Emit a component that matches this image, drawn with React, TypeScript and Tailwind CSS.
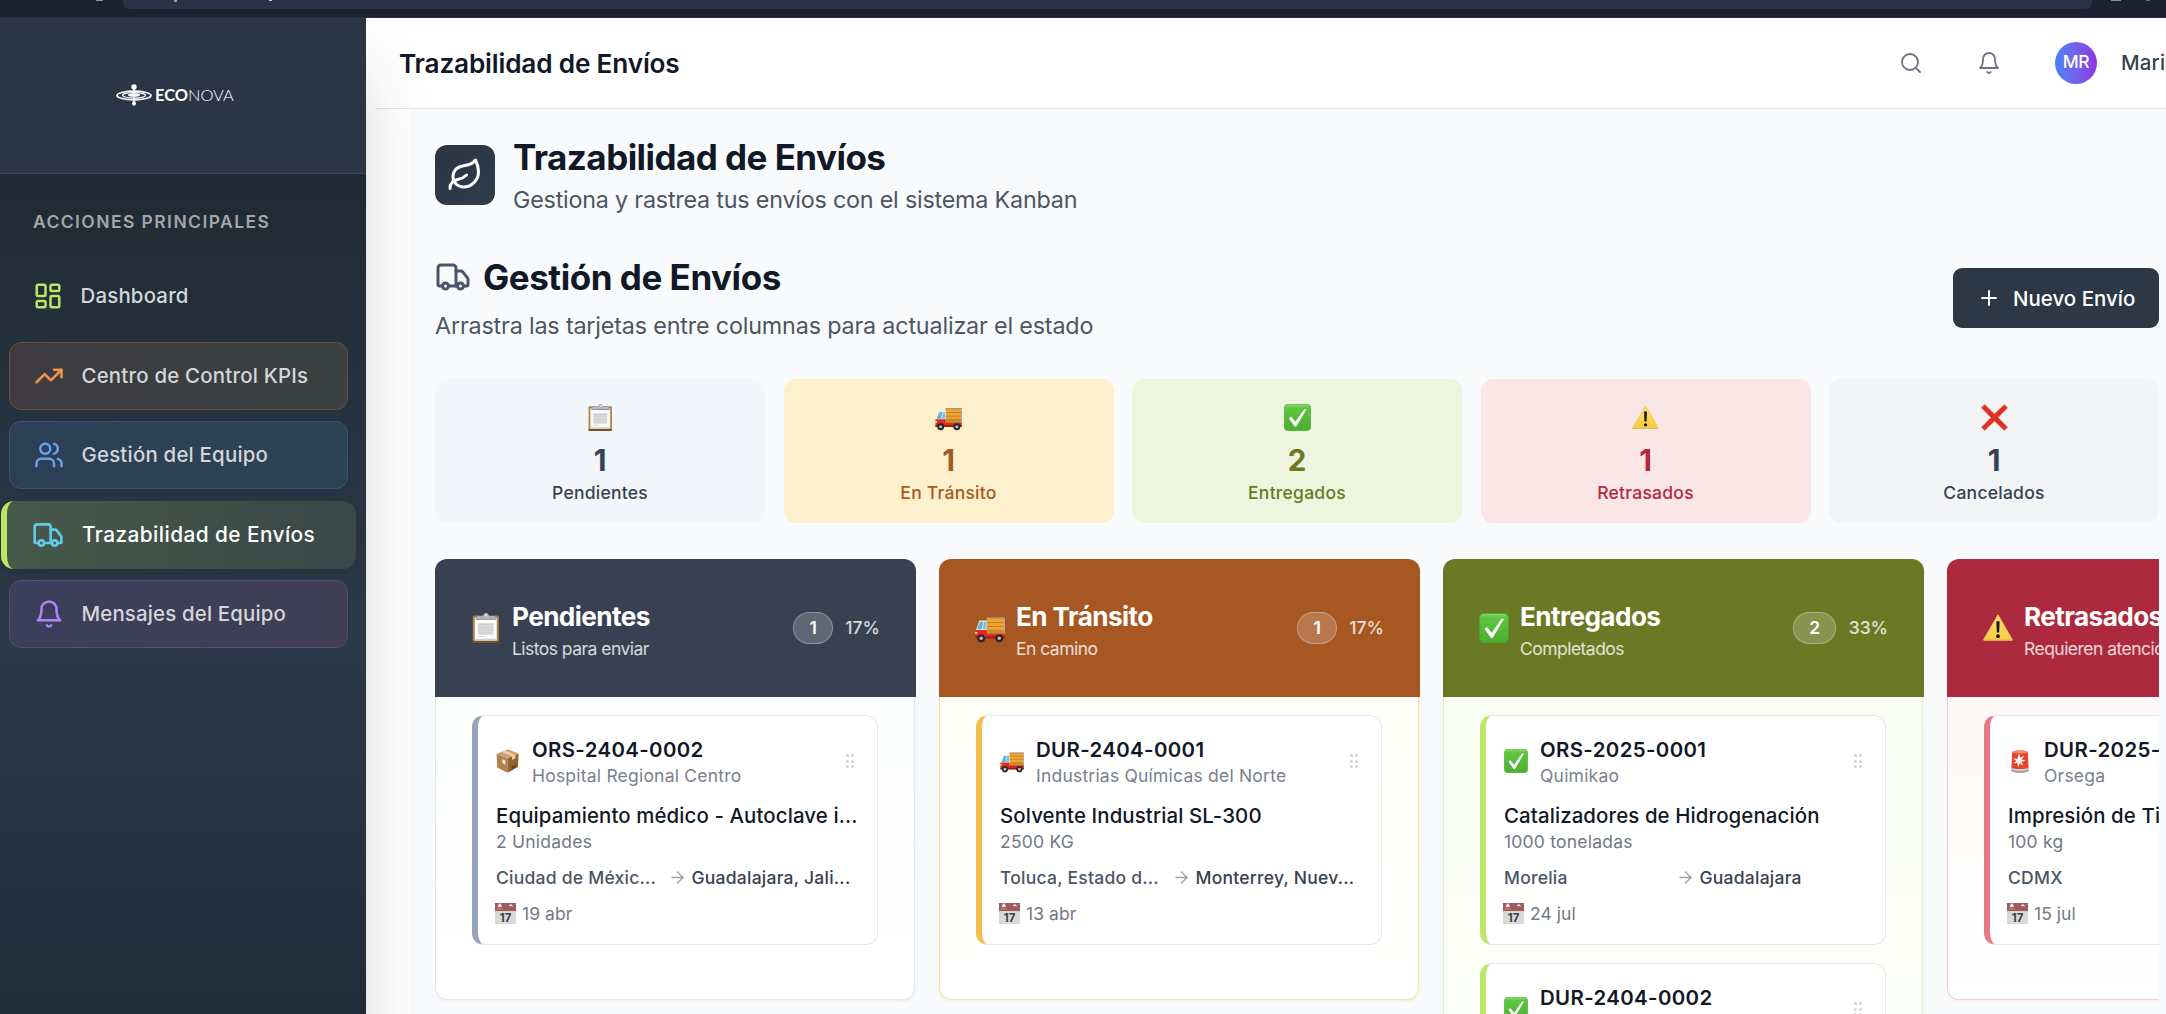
import React from 'react';
import { ArrowRight, LayoutDashboard, Leaf, Plus, Search, TrendingUp, Truck, Users } from 'lucide-react';

type IconProps = { className?: string; strokeWidth?: number };

function BellIcon({ className, strokeWidth = 2 }: IconProps) {
  return (
    <svg viewBox="0 0 24 24" fill="none" stroke="currentColor" strokeWidth={strokeWidth} strokeLinecap="round" strokeLinejoin="round" className={className}>
      <path d="M6 8a6 6 0 0 1 12 0c0 7 3 9 3 9H3s3-2 3-9" />
      <path d="M10.3 21a1.94 1.94 0 0 0 3.4 0" />
    </svg>
  );
}

function Clipboard({ className }: IconProps) {
  return (
    <svg viewBox="0 0 24 24" className={className}>
      <rect x="1.4" y="2" width="20.8" height="22" rx="1.2" fill="#ab8550" />
      <rect x="1.4" y="22.2" width="20.8" height="1.8" rx=".8" fill="#765327" />
      <rect x="3" y="4" width="17.6" height="18" fill="#fbfbfb" />
      <path d="M3 20.6h17.6V22H3z" fill="#cfcfcf" />
      <rect x="5.6" y="8" width="12.4" height="9.500" fill="#dadada" />
      <g fill="#cdcdcd">
        <rect x="5.600" y="9" width="12.400" height=".6" />
        <rect x="5.600" y="11.200" width="12.400" height=".6" />
        <rect x="5.600" y="13.400" width="12.400" height=".6" />
        <rect x="5.600" y="15.600" width="10" height=".6" />
        <rect x="5.600" y="18.400" width="5" height=".6" />
      </g>
      <path d="M5 2.6h4.2C10 2.4 10 0 12 0s2 2.4 2.8 2.6H19l1.2 2.6H3.8z" fill="#b4b9c0" />
      <path d="M3.8 4.6h16.4v.8H3.8z" fill="#888e96" />
      <circle cx="12" cy="1.8" r=".8" fill="#e8ebef" />
    </svg>
  );
}

function Lorry({ className }: IconProps) {
  return (
    <svg viewBox="0 0 24 24" className={className}>
      <rect x="9.4" y="3.6" width="14.4" height="14" fill="#f0a433" />
      <path d="M9.4 3.6h14.4v1H9.4z" fill="#9b958a" />
      <path d="M9.4 7.2h14.4v.6H9.4zM9.4 10.4h14.4v.6H9.4zM9.4 13.4h14.4v.6H9.4z" fill="#b87416" />
      <path d="M9.4 14h14.4v3.6H9.4z" fill="#c98a3c" />
      <path d="M22.9 4.6h.9v13h-.9z" fill="#b0aea8" />
      <path d="M3.4 6h6v8.4H.6z" fill="#eaf0f3" />
      <path d="M3.9 7h2.5l-.8 6H1.6z" fill="#62b1d6" />
      <path d="M7 7h2v6H6.3z" fill="#7cc3e2" />
      <path d="M.4 13.6h9v3h14.4v3.6H.4z" fill="#dc2a1e" />
      <path d="M.4 18.8h23.4v1.6H.4z" fill="#a31a14" />
      <rect x=".2" y="15.2" width="1.6" height="1.4" fill="#ffe9a8" />
      <circle cx="5" cy="20.2" r="3.1" fill="#27272b" />
      <circle cx="5" cy="20.2" r="1.4" fill="#b9bcc2" />
      <circle cx="19.4" cy="20.2" r="3.1" fill="#27272b" />
      <circle cx="19.4" cy="20.2" r="1.4" fill="#b9bcc2" />
    </svg>
  );
}

function Check({ className }: IconProps) {
  return (
    <svg viewBox="0 0 24 24" className={className}>
      <defs>
        <linearGradient id="chk" x1="0" y1="0" x2="0" y2="1">
          <stop offset="0" stopColor="#8ade72" />
          <stop offset=".14" stopColor="#5ec53f" />
          <stop offset="1" stopColor="#4cae2f" />
        </linearGradient>
      </defs>
      <rect x=".3" y=".3" width="23.4" height="23.4" rx="3.6" fill="url(#chk)" stroke="#4aa436" strokeWidth=".6" />
      <path d="M18 4.600h2L10.900 20H9.600L4.400 12.800l2-1.700 3.700 4.600z" fill="#fff" />
    </svg>
  );
}

function Warning({ className }: IconProps) {
  return (
    <svg viewBox="0 0 24 24" className={className}>
      <defs>
        <linearGradient id="wrn" x1="0" y1="0" x2="0" y2="1">
          <stop offset="0" stopColor="#fde16b" />
          <stop offset="1" stopColor="#f9cb3e" />
        </linearGradient>
      </defs>
      <path d="M12 1.800 23.300 21.400H.7z" fill="url(#wrn)" stroke="#f3cf62" strokeWidth="1" strokeLinejoin="round" />
      <path d="M.6 21.200h22.800v1H.6z" fill="#e3b84c" />
      <path d="M10.700 6.600h2.600l-.4 9h-1.800z" fill="#15140c" />
      <circle cx="12" cy="18.500" r="1.500" fill="#15140c" />
    </svg>
  );
}

function Cross({ className }: IconProps) {
  return (
    <svg viewBox="0 0 24 24" className={className}>
      <path d="M.5 3.400 3.300.6 12 9l8.700-8.400 2.800 2.800L15 12l8.500 8.600-2.800 2.800L12 15l-8.700 8.400-2.800-2.800L9 12z" fill="#df3123" stroke="#df3123" strokeWidth=".6" strokeLinejoin="round" />
    </svg>
  );
}

function Parcel({ className }: IconProps) {
  return (
    <svg viewBox="0 0 24 24" className={className}>
      <path d="M.6 4.800 11.400 9.200v14.600L1.200 18.600z" fill="#b5804c" />
      <path d="M22.600 4.600 11.400 9.200v14.600L22 18z" fill="#94612f" />
      <path d="M.6 4.800 12.200.4 22.600 4.600 11.400 9.200z" fill="#cf9f6b" />
      <path d="m5.800 2.900 3.200-1.200 10.400 4.200v3.400L16 10.800V7.300z" fill="#e6d0b0" />
      <path d="M6.400 10v4.200l3 1.400v-4.200z" fill="#f1ece2" />
      <path d="m15.600 17.200 4.400-2v3l-4.400 2z" fill="#6d441d" />
    </svg>
  );
}

function Siren({ className }: IconProps) {
  return (
    <svg viewBox="0 0 24 24" className={className}>
      <path d="M3.400 18.600h17.200v2.600c0 1.500-3.800 2.600-8.600 2.600s-8.600-1.100-8.600-2.600z" fill="#9b9a98" />
      <path d="M3.400 18.400h17.200v1.600c-2 1.300-5 1.800-8.600 1.800s-6.600-.5-8.600-1.800z" fill="#d9d7d4" />
      <path d="M4.200 3.200C4.400.9 19.600.9 19.800 3.200l.8 15.200c-2 2-15.200 2-17.200 0z" fill="#e2452e" />
      <path d="M4.200 3.200C4.400.9 19.600.9 19.800 3.200c-1 1.600-14.600 1.600-15.600 0z" fill="#f58a6d" />
      <path d="m11 4.600 1.200 4 4-1.600-2.400 3.400 4 1.400-4.200 1 1.800 3.800-3.600-2.400-1.600 3.800-.8-4.200-4 .8 3-2.600-3.400-2.400 4.200.4z" fill="#fff4ee" />
    </svg>
  );
}

function CalendarDay({ className }: IconProps) {
  return (
    <svg viewBox="0 0 24 24" className={className}>
      <path d="M0 0h24v24H0z" fill="#d9d9da" />
      <path d="M0 0h24v9.200H0z" fill="#a05a5c" />
      <path d="m3 4.600 1.600-4h2l1.400 4zM15.600 3l2.600-2 3 3z" fill="#f1e9e9" />
      <path d="M2 6.800h5M8.400 5.600v1.800" stroke="#d7b9ba" strokeWidth=".9" />
      <text x="12" y="21.200" textAnchor="middle" fontFamily="Inter, sans-serif" fontSize="13" fontWeight="700" fill="#3e3e40">17</text>
    </svg>
  );
}

function RippleLogo() {
  return (
    <svg viewBox="0 0 36 22" className="mb-px h-[22px] w-9 shrink-0" fill="none" stroke="#fff">
      <ellipse cx="18" cy="11.500" rx="17" ry="4.300" strokeWidth="1.700" />
      <ellipse cx="18" cy="11.300" rx="11.500" ry="2.800" strokeWidth="1.200" />
      <ellipse cx="18" cy="11" rx="6" ry="1.500" fill="#fff" strokeWidth=".8" />
      <circle cx="18" cy="3" r="2.700" fill="#fff" stroke="none" />
      <path d="M17.400 5h1.200v12h-1.200z" fill="#fff" stroke="none" />
      <ellipse cx="18" cy="19.400" rx="1.900" ry="2.300" fill="#fff" stroke="none" />
    </svg>
  );
}

function NavItem({ icon, label, className }: { icon: React.ReactNode; label: string; className: string }) {
  return (
    <a className={`flex h-[68px] items-center font-[460] ${className}`}>
      {icon}
      <span className="pt-px whitespace-nowrap">{label}</span>
    </a>
  );
}

function Sidebar() {
  return (
    <aside className="z-10 h-[1150px] w-[366px] shrink-0 bg-[#212c39] shadow-[0_38px_75px_-18px_rgba(0,0,0,0.25)]">
      <div className="flex h-[156px] items-center gap-[3px] border-b border-[#3a4652] bg-[#2a3646] pl-[116px]">
        <RippleLogo />
        <span className="font-[Lato] text-[16.4px] leading-none text-white">
          <b className="font-bold">ECO</b>
          <span className="font-light">NOVA</span>
        </span>
      </div>
      <div className="h-[840px] bg-[linear-gradient(180deg,#1f2a34_0%,#2c3948_55%,#212c39_100%)] pt-[34px]">
        <h3 className="pl-[33px] text-[17.5px] leading-[27px] font-[560] tracking-[1.42px] text-[#a2a6ab]">ACCIONES PRINCIPALES</h3>
        <nav className="mt-[27px] flex flex-col gap-[11.5px]">
          <NavItem
            icon={<LayoutDashboard className="size-[30px] text-[#bbe663]" />}
            label="Dashboard"
            className="ml-[9px] w-[339px] gap-[17.5px] pl-6 text-[20.4px] tracking-[0.2px] text-[#d3d6d9]"
          />
          <NavItem
            icon={<TrendingUp className="size-[30px] text-[#f0944b]" />}
            label="Centro de Control KPIs"
            className="ml-[9px] w-[339px] gap-[17.5px] rounded-xl border border-[#66523f] bg-linear-to-r from-[#3e3b40] to-[#3a4140] pl-6 text-[20.4px] tracking-[0.22px] text-[#d3d6d9]"
          />
          <NavItem
            icon={<Users className="size-[30px] text-[#6a9ef0]" />}
            label="Gestión del Equipo"
            className="ml-[9px] w-[339px] gap-[17.5px] rounded-xl border border-[#37537b] bg-linear-to-r from-[#2d3f56] to-[#2c4452] pl-6 text-[20.4px] tracking-[0.22px] text-[#d3d6d9]"
          />
          <NavItem
            icon={<Truck className="size-[32px] text-[#5fcbe4]" />}
            label="Trazabilidad de Envíos"
            className="ml-px w-[355px] gap-[18px] rounded-[13px] border-l-[6px] border-[#bbe663] bg-linear-to-r from-[#47594a] to-[#394747] pl-[25px] text-[20.8px] tracking-[0.44px] text-white shadow-[0_4px_10px_rgba(0,0,0,0.12)]"
          />
          <NavItem
            icon={<BellIcon className="size-[30px] text-[#b183f5]" />}
            label="Mensajes del Equipo"
            className="ml-[9px] w-[339px] gap-[17.5px] rounded-xl border border-[#554a75] bg-linear-to-r from-[#3b3e5c] to-[#403e53] pl-6 text-[20.4px] tracking-[0.17px] text-[#d3d6d9]"
          />
        </nav>
      </div>
    </aside>
  );
}

const stats = [
  { Icon: Clipboard, value: 1, label: 'Pendientes', className: 'bg-[#f2f5fa] text-[#374151]' },
  { Icon: Lorry, value: 1, label: 'En Tránsito', className: 'bg-[#fcf1cc] text-[#a85823]' },
  { Icon: Check, value: 2, label: 'Entregados', className: 'bg-[#eef5de] text-[#6c7823]' },
  { Icon: Warning, value: 1, label: 'Retrasados', className: 'bg-[#fae5e7] text-[#b02a40]' },
  { Icon: Cross, value: 1, label: 'Cancelados', className: 'bg-[#f3f4f6] text-[#374151]' },
];

type Shipment = { Icon: React.FC<IconProps>; code: string; client: string; product: string; quantity: string; from: string; to: string; date: string };

type Column = { Icon: React.FC<IconProps>; title: string; subtitle: string; count: number; share: string; header: string; body: string; accent: string; items: Shipment[] };

const columns: Column[] = [
  {
    Icon: Clipboard, title: 'Pendientes', subtitle: 'Listos para enviar', count: 1, share: '17%',
    header: 'bg-[#374152]', body: 'h-[303px] border-[#e2e8f0] from-[#fcfdfd]', accent: 'border-l-[#96a4ba]',
    items: [{ Icon: Parcel, code: 'ORS-2404-0002', client: 'Hospital Regional Centro', product: 'Equipamiento médico - Autoclave i...', quantity: '2 Unidades', from: 'Ciudad de Méxic...', to: 'Guadalajara, Jali...', date: '19 abr' }],
  },
  {
    Icon: Lorry, title: 'En Tránsito', subtitle: 'En camino', count: 1, share: '17%',
    header: 'bg-[#a75722]', body: 'h-[303px] border-[#fae39a] from-[#fffef8]', accent: 'border-l-[#f2bf4c]',
    items: [{ Icon: Lorry, code: 'DUR-2404-0001', client: 'Industrias Químicas del Norte', product: 'Solvente Industrial SL-300', quantity: '2500 KG', from: 'Toluca, Estado d...', to: 'Monterrey, Nuev...', date: '13 abr' }],
  },
  {
    Icon: Check, title: 'Entregados', subtitle: 'Completados', count: 2, share: '33%',
    header: 'bg-[#6c7924]', body: 'h-[550px] border-[#e1f3bb] from-[#fafef2]', accent: 'border-l-[#bde76a]',
    items: [
      { Icon: Check, code: 'ORS-2025-0001', client: 'Quimikao', product: 'Catalizadores de Hidrogenación', quantity: '1000 toneladas', from: 'Morelia', to: 'Guadalajara', date: '24 jul' },
      { Icon: Check, code: 'DUR-2404-0002', client: '', product: '', quantity: '', from: '', to: '', date: '' },
    ],
  },
  {
    Icon: Warning, title: 'Retrasados', subtitle: 'Requieren atención', count: 1, share: '17%',
    header: 'bg-[#ad2a3e]', body: 'h-[303px] border-[#f5cbd0] from-[#fef8f8]', accent: 'border-l-[#e97887]',
    items: [{ Icon: Siren, code: 'DUR-2025-0001', client: 'Orsega', product: 'Impresión de Tintas', quantity: '100 kg', from: 'CDMX', to: '', date: '15 jul' }],
  },
];

function Grip() {
  return (
    <div className="mr-[4px] grid grid-cols-2 gap-x-[2px] gap-y-[2.5px]">
      {[0, 1, 2, 3, 4, 5].map((dot) => (
        <span key={dot} className="size-[3px] rounded-full bg-[#cfd3da]" />
      ))}
    </div>
  );
}

function ShipmentCard({ item, accent }: { item: Shipment; accent: string }) {
  return (
    <article className={`h-[230px] w-[406px] shrink-0 rounded-xl border border-l-[6px] border-[#e5e7eb] bg-white pt-[18.5px] pr-[19px] pl-[18px] whitespace-nowrap ${accent}`}>
      <div className="flex items-center">
        <item.Icon className="size-6 shrink-0" />
        <div className="ml-3 flex-1">
          <h4 className="text-[20.4px] leading-[29px] font-semibold tracking-[0.38px] text-[#111827]">{item.code}</h4>
          <p className="h-6 text-[17.5px] leading-6 tracking-[0.21px] text-[#7a808c]">{item.client}</p>
        </div>
        <Grip />
      </div>
      <p className="mt-[13px] text-[20.4px] leading-[29px] font-[480] tracking-[0.12px] text-[#111827]">{item.product}</p>
      <p className="text-[17.5px] leading-6 tracking-[0.22px] text-[#737986]">{item.quantity}</p>
      {item.from && (
        <div className="mt-3 flex items-center text-[17.5px] leading-6 font-[470] tracking-[0.24px]">
          <span className="w-[172px] text-[#4b5563]">{item.from}</span>
          <ArrowRight className="size-[19px] text-[#9ca3af]" strokeWidth={1.7} />
          <span className="ml-[4.5px] text-[#374151]">{item.to}</span>
        </div>
      )}
      {item.date && (
        <div className="mt-3 flex items-center text-[17.5px] leading-6 text-[#737986]">
          <CalendarDay className="mb-px -ml-px size-[21px]" />
          <span className="ml-[6px] tracking-[0.05px]">{item.date}</span>
        </div>
      )}
    </article>
  );
}

function BoardColumn({ column }: { column: Column }) {
  return (
    <section className="w-[481px] shrink-0">
      <header className={`flex h-[138px] items-center rounded-t-xl pr-9 pl-9 ${column.header}`}>
        <column.Icon className="size-[30px] shrink-0" />
        <div className="ml-[11px] flex-1 pt-[3px] whitespace-nowrap text-white">
          <h3 className="text-[26.2px] leading-9 font-bold tracking-[-0.6px]">{column.title}</h3>
          <p className="mt-0.5 text-[17.5px] leading-6 tracking-[-0.53px] text-white/80">{column.subtitle}</p>
        </div>
        <span className="flex h-8 items-center rounded-full border border-white/30 bg-white/20 px-[15px] text-[17.5px] font-semibold text-white">{column.count}</span>
        <span className="ml-[12.5px] text-[17.5px] font-[470] text-white/80">{column.share}</span>
      </header>
      <div className={`flex w-[480px] flex-col gap-[18px] rounded-b-xl border border-t-0 bg-linear-to-b to-white pt-[18px] pl-9 shadow-[0_1px_3px_rgba(0,0,0,0.06)] ${column.body}`}>
        {column.items.map((item) => (
          <ShipmentCard key={item.code} item={item} accent={column.accent} />
        ))}
      </div>
    </section>
  );
}

export default function App() {
  return (
    <div className="flex h-[1014px] w-[2166px] flex-col overflow-hidden bg-white font-[Inter,sans-serif]">
      <div className="relative h-[18px] shrink-0 border-b border-[#2c3144] bg-[#1d2231]">
        <div className="ml-[123px] h-[9px] w-[1969px] rounded-b-md bg-[#2b3044]" />
        <span className="absolute top-0 left-[96px] h-px w-[7px] bg-[#8b8e97]" />
        <span className="absolute top-0 left-[174px] h-0.5 w-[3px] bg-[#6fbf73]" />
        <span className="absolute top-0 left-[269px] h-px w-[3px] bg-[#c8cad0]" />
        <span className="absolute top-0 left-[2111px] h-px w-[10px] bg-[#8b8e97]" />
        <span className="absolute top-0 left-[2146px] h-px w-1 bg-[#6b6e79]" />
      </div>
      <div className="flex h-[996px] shrink-0 overflow-hidden">
        <Sidebar />
        <div className="flex min-w-0 flex-1 flex-col">
          <header className="ml-[9px] flex h-[91px] shrink-0 items-center border-b border-[#e7e5e4] bg-white pb-px whitespace-nowrap">
            <h1 className="flex-1 pt-[3px] pl-6 text-[26.2px] font-semibold tracking-[-0.18px] text-[#111827]">Trazabilidad de Envíos</h1>
            <Search className="size-6 text-[#6b7280]" strokeWidth={1.8} />
            <BellIcon className="ml-[54px] size-6 text-[#6b7280]" strokeWidth={1.8} />
            <div className="ml-[54px] flex size-[42px] items-center justify-center rounded-full bg-linear-to-r from-[#4383f3] to-[#8b33e2] text-[17.5px] font-[470] tracking-[-0.3px] text-white">MR</div>
            <div className="ml-6 w-[45px] overflow-hidden pt-0.5 text-[20.4px] font-[470] tracking-[0.2px] text-[#374151]">Mario</div>
          </header>
          <main className="ml-[45px] flex-1 overflow-hidden bg-[#f9fafc] pl-6">
            <div className="w-[1724px] overflow-hidden pt-6">
              <div className="flex items-start gap-[18px]">
                <div className="mt-3 flex size-[60px] items-center justify-center rounded-xl bg-linear-to-br from-[#2b3644] to-[#2e3c4b]">
                  <Leaf className="size-9 text-white" />
                </div>
                <div className="pt-0.5">
                  <h2 className="text-[35px] leading-[45px] font-bold tracking-[-0.54px] text-[#111827]">Trazabilidad de Envíos</h2>
                  <p className="mt-0.5 text-[23.3px] leading-9 tracking-[-0.2px] text-[#4b5563]">Gestiona y rastrea tus envíos con el sistema Kanban</p>
                </div>
              </div>

              <div className="mt-[37px] flex items-start justify-between">
                <div>
                  <div className="flex items-center gap-3">
                    <Truck className="mb-px size-9 text-[#4b5568]" />
                    <h2 className="text-[35px] leading-[45px] font-bold tracking-[-0.47px] text-[#111827]">Gestión de Envíos</h2>
                  </div>
                  <p className="mt-2 text-[23.3px] leading-9 tracking-[-0.16px] text-[#4b5563]">Arrastra las tarjetas entre columnas para actualizar el estado</p>
                </div>
                <button className="mt-[13px] flex h-[60px] w-[206px] items-center rounded-[9px] bg-[#2d3847] pl-6 text-[20.4px] font-[470] text-white">
                  <Plus className="size-6" strokeWidth={1.9} />
                  <span className="ml-3 pt-0.5 tracking-[0.05px]">Nuevo Envío</span>
                </button>
              </div>

              <div className="mt-[35px] grid grid-cols-5 gap-[18.5px]">
                {stats.map(({ Icon, value, label, className }) => (
                  <div key={label} className={`flex h-36 flex-col items-center rounded-xl pt-[25px] ${className}`}>
                    <Icon className="size-[27px]" />
                    <span className="mt-[11px] text-[29.500px] leading-9 font-bold">{value}</span>
                    <span className="mt-[2.5px] text-[17.5px] leading-6 font-[470] tracking-[0.25px]">{label}</span>
                  </div>
                ))}
              </div>

              <div className="mt-9 flex gap-[23px]">
                {columns.map((column) => (
                  <BoardColumn key={column.title} column={column} />
                ))}
              </div>
            </div>
          </main>
        </div>
      </div>
    </div>
  );
}
